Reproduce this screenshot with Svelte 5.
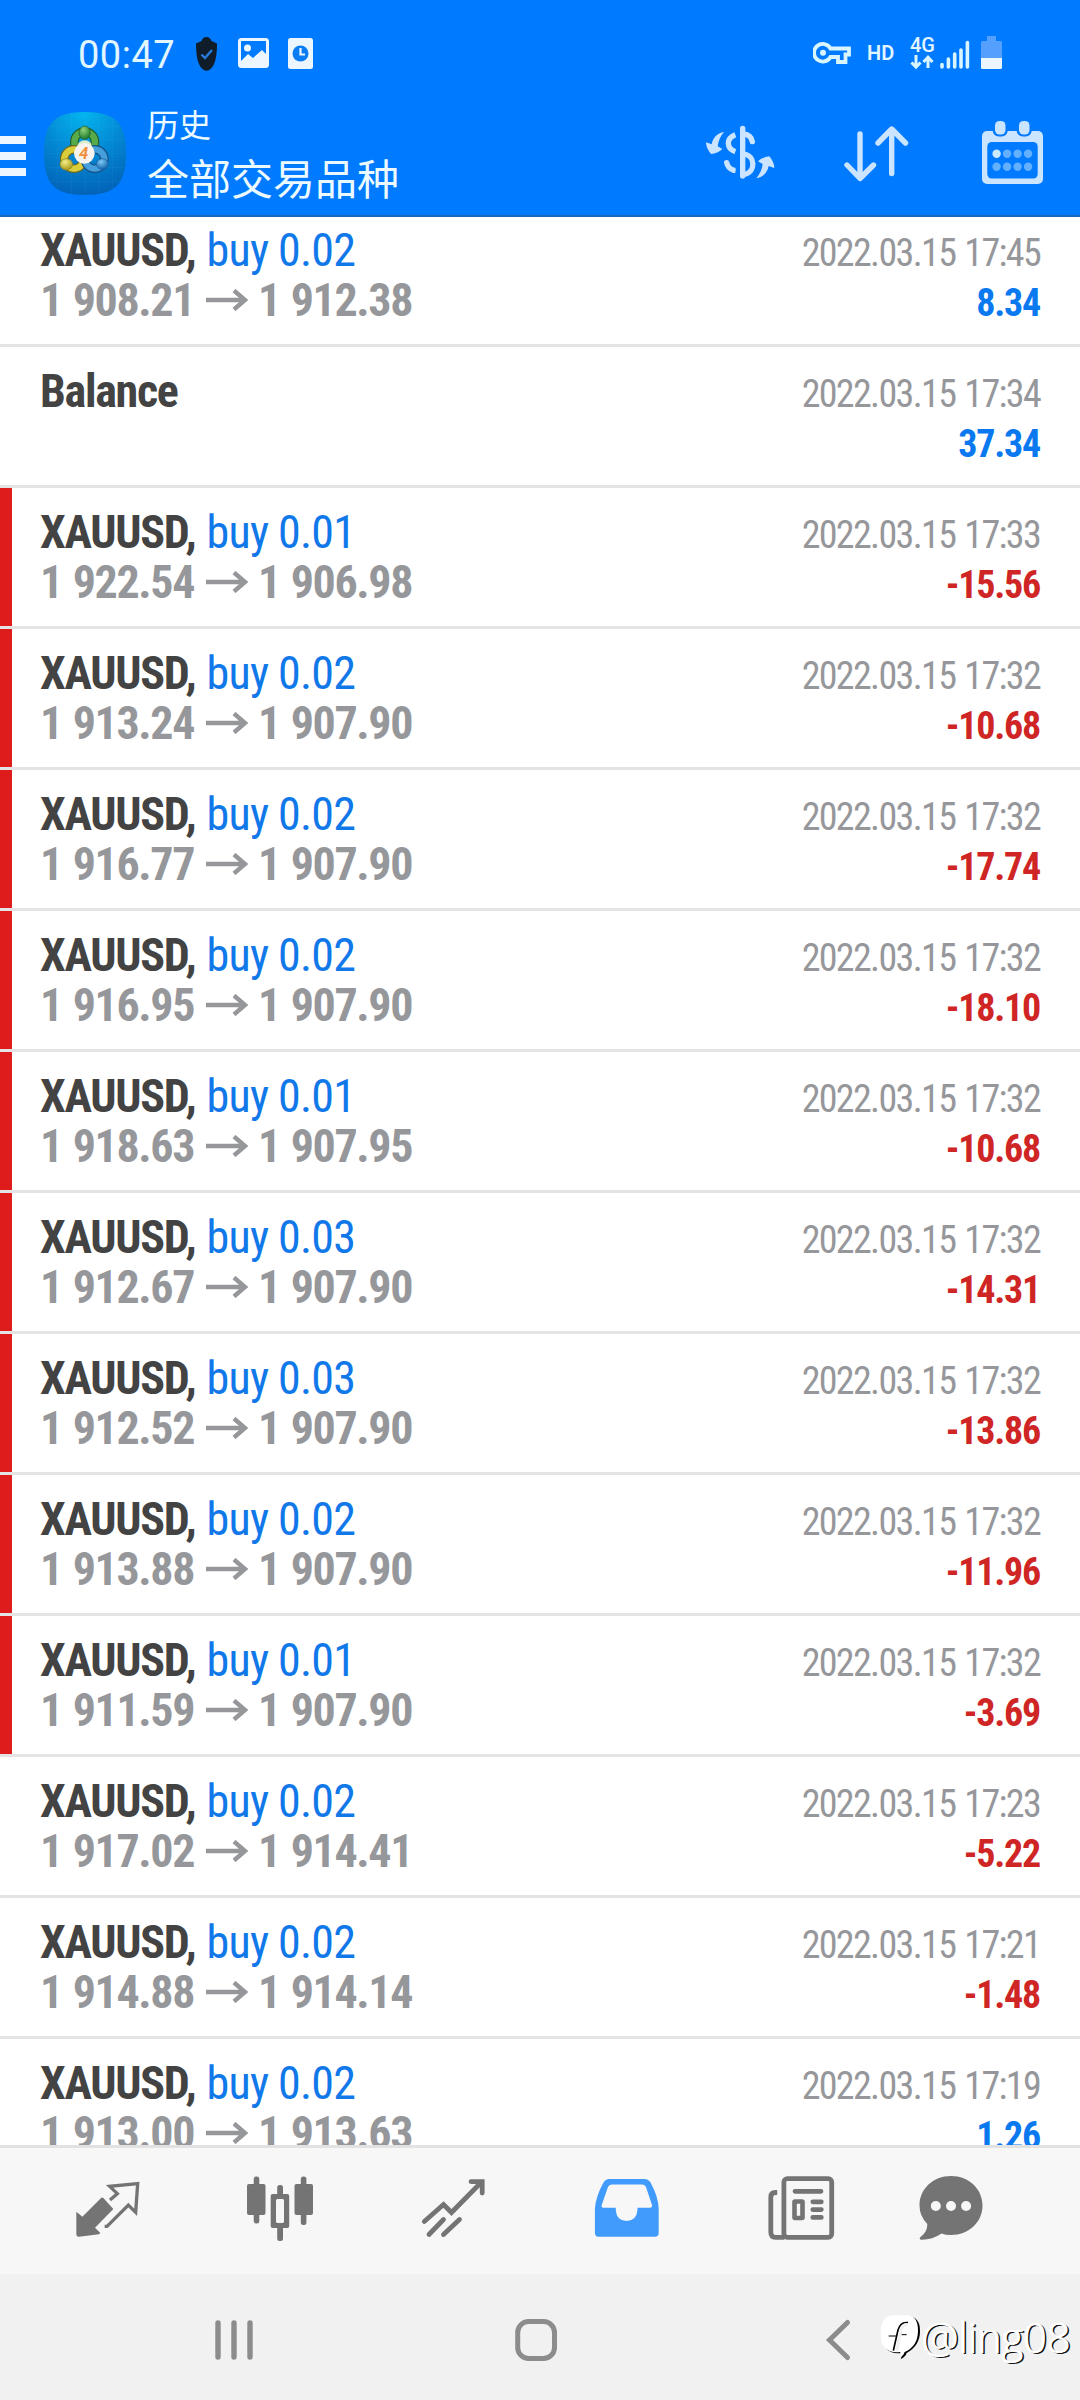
<script>
  const deals = [
    { volume: "0.02", open: "1 908.21", close: "1 912.38", time: "17:45", profit: "8.34" },
    { time: "17:34", profit: "37.34" },
    { volume: "0.01", open: "1 922.54", close: "1 906.98", time: "17:33", profit: "-15.56", stopped: true },
    { volume: "0.02", open: "1 913.24", close: "1 907.90", time: "17:32", profit: "-10.68", stopped: true },
    { volume: "0.02", open: "1 916.77", close: "1 907.90", time: "17:32", profit: "-17.74", stopped: true },
    { volume: "0.02", open: "1 916.95", close: "1 907.90", time: "17:32", profit: "-18.10", stopped: true },
    { volume: "0.01", open: "1 918.63", close: "1 907.95", time: "17:32", profit: "-10.68", stopped: true },
    { volume: "0.03", open: "1 912.67", close: "1 907.90", time: "17:32", profit: "-14.31", stopped: true },
    { volume: "0.03", open: "1 912.52", close: "1 907.90", time: "17:32", profit: "-13.86", stopped: true },
    { volume: "0.02", open: "1 913.88", close: "1 907.90", time: "17:32", profit: "-11.96", stopped: true },
    { volume: "0.01", open: "1 911.59", close: "1 907.90", time: "17:32", profit: "-3.69", stopped: true },
    { volume: "0.02", open: "1 917.02", close: "1 914.41", time: "17:23", profit: "-5.22" },
    { volume: "0.02", open: "1 914.88", close: "1 914.14", time: "17:21", profit: "-1.48" },
    { volume: "0.02", open: "1 913.00", close: "1 913.63", time: "17:19", profit: "1.26" },
  ];
</script>

<div class="screen">
  <header>
    <div class="status">
      <span class="clock">00:47</span>
      <svg class="shield" width="21" height="34" viewBox="0 0 21 34">
        <path d="M5.5 4Q7 0 10.5 0T15.500 4L21 6.500Q21 26 15 31.500Q10.500 36 6 31.500Q0 26 0 6.500Z" fill="#0f1c2a" />
        <path d="M5.500 17.500l3.500 3.500 7-8" fill="none" stroke="#2a7ad8" stroke-width="2.400" />
      </svg>
      <svg class="photo" width="31" height="30" viewBox="0 0 31 30">
        <rect x="1.500" y="1.500" width="28" height="27" rx="2" fill="none" stroke="#ecf6ff" stroke-width="3" />
        <circle cx="9.500" cy="10" r="3.500" fill="#ecf6ff" />
        <path d="M3 23l7-7 5 4 9-8 5 5v11H3Z" fill="#ecf6ff" />
      </svg>
      <svg class="doc" width="25" height="31" viewBox="0 0 25 31">
        <rect width="25" height="31" rx="2.500" fill="#ecf6ff" />
        <circle cx="12.500" cy="15.500" r="8" fill="#0a7df5" />
        <path d="M12.500 10v6.500h4.500" fill="none" stroke="#ecf6ff" stroke-width="2.200" />
      </svg>

      <div class="signals">
        <svg width="38" height="22" viewBox="0 0 38 22">
          <path d="M17.500 6.500H36V12.500H32.500V20H25V15H17.500A8.800 8.800 0 1 1 17.500 6.500Z" fill="none" stroke="#d9f5ff" stroke-width="3.800" />
          <circle cx="10" cy="10.800" r="3" fill="#d9f5ff" />
        </svg>
        <span class="hd">HD</span>
        <div class="network">
          <span>4G</span>
          <svg width="24" height="15" viewBox="0 0 24 15">
            <path d="M6 0v12M1.500 7.500L6 12.200l4.500-4.700M18 13V2M13.500 7L18 2.200 22.500 7" fill="none" stroke="#d9f5ff" stroke-width="3" />
          </svg>
        </div>
        <svg class="bars" width="30" height="29" viewBox="0 0 30 29">
          <path d="M2 24.500V27M8.400 19V27M14.700 14V27M21 10V27M27.400 2.500V27" stroke="#d9f5ff" stroke-width="3.600" stroke-linecap="round" />
        </svg>
        <svg class="battery" width="21" height="33" viewBox="0 0 21 33">
          <path d="M6 0h9v5h4.500q1.500 0 1.500 1.500V23H0V6.500Q0 5 1.500 5H6Z" fill="#559fff" />
          <path d="M0 22h21v9.500q0 1.500-1.500 1.500h-18Q0 33 0 31.500Z" fill="#ecf6ff" />
        </svg>
      </div>
    </div>

    <div class="toolbar">
      <div class="burger"><i></i><i></i><i></i></div>
      <svg class="logo" width="82" height="83" viewBox="0 0 246 249">
        <defs>
          <radialGradient id="sky" cx=".48" cy="0" r="1">
            <stop offset="0" stop-color="#04b6ee" />
            <stop offset=".5" stop-color="#0389d4" />
            <stop offset="1" stop-color="#0263b7" />
          </radialGradient>
          <radialGradient id="leaf" cx=".4" cy=".3" r=".7"><stop offset="0" stop-color="#8fd07a" /><stop offset="1" stop-color="#1e7c2c" /></radialGradient>
          <radialGradient id="gold" cx=".4" cy=".3" r=".7"><stop offset="0" stop-color="#f4ef86" /><stop offset="1" stop-color="#a89a1c" /></radialGradient>
          <radialGradient id="wave" cx=".4" cy=".3" r=".7"><stop offset="0" stop-color="#7cc8f4" /><stop offset="1" stop-color="#1466ae" /></radialGradient>
        </defs>
        <path d="M123 0C215 0 246 32 246 124S215 249 123 249 0 216 0 124 31 0 123 0Z" fill="url(#sky)" />
        <path d="M40 20v209M82 3v243M123 1v246M164 3v243M206 20v209M16 43h214M3 84h240M1 125h244M3 166h240M16 208h214" stroke="#5fd0ff" stroke-opacity=".13" stroke-width="2" />
        <g fill="none" stroke-width="26">
          <circle cx="122" cy="90" r="31" stroke="#205c2a" />
          <circle cx="122" cy="90" r="31" stroke="#58ab4a" stroke-width="19" />
          <circle cx="90" cy="141" r="29" stroke="#6d6a20" />
          <circle cx="90" cy="141" r="29" stroke="#d9cd3b" stroke-width="19" />
          <circle cx="152" cy="141" r="29" stroke="#164f83" />
          <circle cx="152" cy="141" r="29" stroke="#459fdc" stroke-width="19" />
        </g>
        <path d="M104 92q18-14 36 0l8 26H96Z" fill="#dcebc9" />
        <g stroke-width="2">
          <ellipse cx="122" cy="62" rx="17" ry="20" fill="url(#leaf)" stroke="#205c2a" />
          <ellipse cx="67" cy="157" rx="19" ry="17" fill="url(#gold)" stroke="#8d8425" />
          <ellipse cx="175" cy="156" rx="18" ry="16" fill="url(#wave)" stroke="#1a5f9b" />
        </g>
        <circle cx="121" cy="124" r="31" fill="#f7f4ef" />
        <text x="119" y="142" text-anchor="middle" class="four">4</text>
      </svg>
      <div class="titles">
        <span class="sub">历史</span>
        <span class="main">全部交易品种</span>
      </div>
      <div class="actions">
        <svg width="70" height="56" viewBox="30 30 210 168">
          <g fill="none" stroke="#cbe4ff" stroke-width="16">
            <path d="M143 40V183" stroke-linecap="round" />
            <path d="M146 57Q168 59 172 80" stroke-linecap="round" />
            <path d="M148 118C180 120 184 172 148 178" />
            <path d="M121 59C93 70 93 100 121 110" />
            <path d="M95 143Q99 160 114 165" stroke-linecap="round" />
          </g>
          <path d="M121 158h-8v16h8Z" fill="#cbe4ff" />
          <g fill="#cbe4ff">
            <path d="M87 51C66 54 53 70 50 88L33 82Q33 99 48 117Q68 115 82 102L68 94C70 78 76 64 87 51Z" />
            <path d="M87 51C66 54 53 70 50 88L33 82Q33 99 48 117Q68 115 82 102L68 94C70 78 76 64 87 51Z" transform="rotate(180 135.500 120.500)" />
          </g>
        </svg>
        <svg width="66" height="58" viewBox="843 125 66 58">
          <path d="M860 134V178M847 165L860 178.500L873.500 165M891.700 173.500V129.500M878 143L891.700 129L905.500 143" fill="none" stroke="#cbe4ff" stroke-width="5.400" stroke-linecap="round" stroke-linejoin="round" />
        </svg>
        <svg width="62" height="64" viewBox="982 121 62 64">
          <rect x="982" y="131" width="61" height="53" rx="5" fill="#cbe4ff" />
          <rect x="987.300" y="142" width="50.400" height="36.500" rx="4.500" fill="#007aff" />
          <rect x="992.700" y="118" width="15" height="18.500" rx="6" fill="#007aff" />
          <rect x="1016.700" y="118" width="15" height="18.500" rx="6" fill="#007aff" />
          <rect x="995" y="121" width="10.500" height="13.500" rx="4.500" fill="#cbe4ff" />
          <rect x="1019" y="121" width="10.500" height="13.500" rx="4.500" fill="#cbe4ff" />
          {#each [153.7, 166.7] as y, row}
            {#each [996.6, 1007.1, 1017.6, 1028.1] as x, col}
              <circle cx={x} cy={y} r="4.200" fill={row + col ? "#62b0ff" : "#cbe9ff"} />
            {/each}
          {/each}
        </svg>
      </div>
    </div>
  </header>

  <main>
    {#each deals as deal}
      <div class="row" class:stopped={deal.stopped}>
        <div class="deal">
          {#if deal.volume}
            <div class="line"><b>XAUUSD,</b><span class="side">buy {deal.volume}</span></div>
            <div class="line price">
              <span class="open">{deal.open}</span>
              <svg width="43" height="22" viewBox="0 0 43 22">
                <path d="M0 11H38M28 1.500L39 11L28 20.500" fill="none" stroke="#96979b" stroke-width="4.400" />
              </svg>
              <span>{deal.close}</span>
            </div>
          {:else}
            <div class="line"><b>Balance</b></div>
          {/if}
        </div>
        <div class="result">
          <div class="line">2022.03.15 {deal.time}</div>
          <div class="line profit" class:loss={deal.profit < 0}>{deal.profit}</div>
        </div>
      </div>
    {/each}
  </main>

  <nav class="tabs">
    <svg width="70" height="70" viewBox="35 24 210 210">
      <path d="M48 140L66 155L123 98Q126 96 129 99L159 132L104 188L120 204L116 208L56 215Q48 215 48 208Z" fill="#747474" />
      <path d="M149 105L171 86L148 64L232 56L226 142L204 120L140 184H133" fill="none" stroke="#747474" stroke-width="10" />
    </svg>
    <svg width="70" height="70" viewBox="245 2173 70 70">
      <g fill="#747474">
        <rect x="247" y="2184" width="18.500" height="31" rx="2" />
        <rect x="253.700" y="2176.500" width="5.600" height="47" rx="2.500" />
        <rect x="270.700" y="2194" width="18.500" height="34" rx="2" />
        <rect x="277.200" y="2185" width="5.800" height="56" rx="2.500" />
        <rect x="294.500" y="2184" width="18.500" height="31" rx="2" />
        <rect x="300.800" y="2176.500" width="5.600" height="48.500" rx="2.500" />
      </g>
      <rect x="276" y="2199" width="8" height="24" rx="1.500" fill="#f7f7f7" />
    </svg>
    <svg width="70" height="70" viewBox="419 2173 70 70">
      <path d="M424.300 2221.500L443.500 2204.500L451.500 2212.500L481.500 2182M471 2181.600H482.200V2193M429 2234.500L443.500 2219.500M443.500 2234.500L459.500 2219.500" fill="none" stroke="#747474" stroke-width="4.800" stroke-linecap="round" />
    </svg>
    <svg width="70" height="70" viewBox="592.500 2173 70 70">
      <path d="M610 2179H645Q649 2179 651 2182.500Q659 2197 659.200 2209V2233Q659.200 2236.700 655.500 2236.700H599Q595.400 2236.700 595.400 2233V2209Q596 2197 604 2182.500Q606 2179 610 2179Z" fill="#409bfd" />
      <path d="M612 2184.500H643Q645.500 2184.500 646.500 2187L652.500 2205Q653 2207.800 650.500 2207.800H638V2210Q637 2221 627 2221T616.300 2210V2207.800H604Q601.500 2207.800 602.200 2205L608.500 2187Q609.500 2184.500 612 2184.500Z" fill="#f7f7f7" />
    </svg>
    <svg width="70" height="70" viewBox="766.500 2173 70 70">
      <g fill="none" stroke="#747474" stroke-width="4.800">
        <rect x="784.400" y="2178.600" width="47.800" height="58.700" rx="3.500" />
        <path d="M777.700 2192.500H776Q771.300 2192.500 771.300 2197V2232Q771.300 2237.300 776 2237.300H785" />
        <rect x="795" y="2201.500" width="8" height="16.500" rx=".5" stroke-width="4.600" />
        <path d="M795.500 2191.300H821.500M813.300 2201.800H821.800M813.300 2209.600H821.800M813.300 2217.400H821.800" stroke-linecap="round" />
      </g>
    </svg>
    <svg width="70" height="70" viewBox="916 2173 70 70">
      <path d="M951 2176C969 2176 982.500 2189 982.500 2205.500S969 2235 951 2235Q945.500 2235 941.500 2233.500Q932 2240 921 2239.700Q918.500 2239 920.500 2237Q927.500 2232 927.300 2224Q919.500 2216 919.500 2205.500C919.500 2189 933 2176 951 2176Z" fill="#747474" />
      <circle cx="935.800" cy="2206" r="5" fill="#f7f7f7" />
      <circle cx="951" cy="2206" r="5" fill="#f7f7f7" />
      <circle cx="966.100" cy="2206" r="5" fill="#f7f7f7" />
    </svg>
  </nav>

  <nav class="system">
    <svg width="46" height="46" viewBox="0 0 46 46">
      <path d="M7 6V40M23 6V40M39 6V40" stroke="#8c8c8c" stroke-width="5.400" stroke-linecap="round" />
    </svg>
    <svg width="46" height="46" viewBox="0 0 46 46">
      <rect x="4.700" y="4.500" width="36.800" height="37" rx="11" fill="none" stroke="#8c8c8c" stroke-width="5" />
    </svg>
    <svg width="46" height="46" viewBox="0 0 46 46">
      <path d="M32.500 5.500L14.500 23L32.500 40.500" fill="none" stroke="#8c8c8c" stroke-width="5" stroke-linecap="round" />
    </svg>
  </nav>

  <div class="stamp">
    <svg width="42" height="46" viewBox="0 0 126 138">
      <path d="M42 6H80Q118 6 118 50T78 116Q74 128 60 134Q66 124 62 116Q4 122 6 62Q4 6 42 6Z" fill="#000" transform="translate(2 1)" />
      <path d="M42 4H80Q114 4 114 50T74 114Q72 124 62 128Q66 122 60 114Q2 120 2 60Q2 4 42 4Z" fill="#fff" />
      <path d="M84 26Q62 22 54 48L40 110" fill="none" stroke="#000" stroke-width="5" />
      <path d="M26 66H50M64 62H80" fill="none" stroke="#000" stroke-width="3" />
      <path d="M84 32Q68 29 62 51L50 112" fill="none" stroke="#f1f1f1" stroke-width="9" />
    </svg>
    <span>@ling08</span>
  </div>
</div>

<style>
  :global(body) {
    margin: 0;
    background: #f1f1f1;
  }

  .screen {
    position: relative;
    display: flex;
    flex-direction: column;
    width: 1080px;
    height: 2400px;
    overflow: hidden;
    background: #fff;
    font-family: "Roboto Condensed", Roboto, "Noto Sans CJK SC", sans-serif;
  }

  svg {
    display: block;
    flex: none;
  }

  header {
    flex: none;
    height: 215px;
    background: #007aff;
    border-bottom: 2px solid #1769bd;
  }

  .status {
    display: flex;
    align-items: flex-start;
    box-sizing: border-box;
    height: 100px;
    padding: 36px 78px 0 78px;
    font-family: Roboto, sans-serif;
    color: #e2f6ff;
  }

  .clock {
    width: 118px;
    font-size: 38px;
    line-height: 38px;
    letter-spacing: 0.5px;
  }

  .shield {
    margin-top: 1px;
  }

  .photo {
    margin: 2px 19px 0 21px;
  }

  .doc {
    margin-top: 2px;
  }

  .signals {
    display: flex;
    align-items: flex-start;
    margin-left: auto;
  }

  .signals > svg:first-child {
    margin-top: 6px;
  }

  .hd {
    width: 26px;
    margin: 5px 17px 0 16px;
    font-size: 20px;
    font-weight: 600;
    line-height: 24px;
  }

  .network {
    width: 24px;
    margin-right: 6px;
    font-size: 20px;
    font-weight: 500;
    line-height: 19px;
  }

  .bars {
    margin: 4px 11px 0 0;
  }

  .toolbar {
    display: flex;
    height: 115px;
  }

  .burger {
    display: flex;
    flex-direction: column;
    gap: 8px;
    width: 26px;
    padding-top: 36px;
  }

  .burger i {
    height: 8px;
    background: #ecf6ff;
  }

  .logo {
    margin: 12px 21px 0 18px;
  }

  .four {
    font: italic 700 50px Roboto, sans-serif;
    fill: #f0913f;
  }

  .titles {
    display: flex;
    flex-direction: column;
    padding-top: 1px;
    font-family: "Noto Sans CJK SC", sans-serif;
    color: #ecfaff;
  }

  .sub {
    font-size: 32px;
    line-height: 44px;
  }

  .main {
    font-size: 42px;
    line-height: 64px;
  }

  .actions {
    display: flex;
    align-items: flex-start;
    margin-left: auto;
    padding: 21px 36px 0 0;
  }

  .actions svg:first-child {
    margin: 4px 68px 0 0;
  }

  .actions svg:nth-child(2) {
    margin: 4px 73px 0 0;
  }

  main {
    flex: 1;
    min-height: 0;
    overflow: hidden;
  }

  .row {
    display: flex;
    justify-content: space-between;
    box-sizing: border-box;
    height: 141px;
    padding: 19px 40px 0;
    border-bottom: 3px solid #e4e4e4;
  }

  .row:first-child {
    margin-top: -11px;
  }

  .stopped {
    background: linear-gradient(90deg, #df1c1c 12px, #fff 12px);
    background-clip: padding-box;
  }

  .line {
    display: flex;
    align-items: center;
    height: 50px;
    line-height: 50px;
    white-space: pre;
  }

  .deal {
    font-size: 46px;
    letter-spacing: -1.300px;
    color: #434343;
  }

  .side {
    margin-left: 11px;
    letter-spacing: -0.800px;
    color: #1178ea;
  }

  .price {
    font-weight: 700;
    letter-spacing: -1.350px;
    word-spacing: 1.500px;
    color: #96979b;
  }

  .open {
    width: 166px;
  }

  .price svg {
    margin-right: 9px;
  }

  .result {
    padding: 3px 0 0;
    font-size: 38px;
    letter-spacing: -1.650px;
    word-spacing: 2px;
    color: #96979b;
  }

  .result .line {
    justify-content: flex-end;
  }

  .profit {
    font-weight: 700;
    letter-spacing: -1.200px;
    color: #0a79f0;
  }

  .loss {
    color: #cf2525;
  }

  .tabs {
    display: grid;
    grid-template-columns: repeat(5, 173.500px) 1fr;
    justify-items: center;
    flex: none;
    box-sizing: border-box;
    height: 129px;
    padding: 25px 65px 0 20px;
    background: #f7f7f7;
    border-top: 3px solid #e2e2e2;
  }

  .system {
    display: grid;
    grid-template-columns: repeat(3, 302px);
    place-items: center;
    flex: none;
    box-sizing: border-box;
    height: 126px;
    padding: 6px 0 0 83px;
    background: #f1f1f1;
  }

  .stamp {
    position: absolute;
    right: 9px;
    bottom: 38px;
    display: flex;
    align-items: center;
    font: 300 41.500px/50px "Open Sans", sans-serif;
    color: #fff;
  }

  .stamp span {
    text-shadow: -1px 0 0 #fff, 1.500px 1px 0 #111;
  }
</style>
